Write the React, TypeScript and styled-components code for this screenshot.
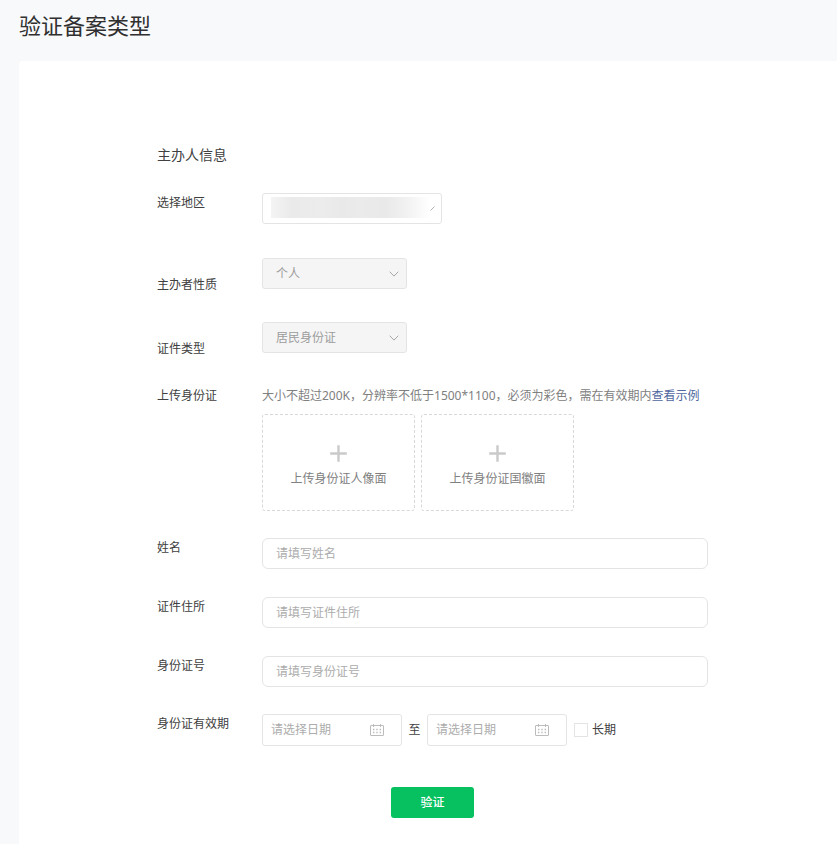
import React from "react";
import styled, { createGlobalStyle } from "styled-components";

const GlobalStyle = createGlobalStyle`
  *, *::before, *::after { box-sizing: border-box; }
  body {
    margin: 0;
    background: #f8f9fb;
    color: #404040;
    font-family: "Noto Sans", "Noto Sans CJK SC", sans-serif;
    font-size: 12px;
    line-height: 20px;
  }
  input, select, button { font: inherit; }
`;

const Page = styled.div`
  display: flex;
  flex-direction: column;
  min-height: 100vh;
  padding-left: 19px;
`;

const PageTitle = styled.h1`
  margin: 0;
  padding: 9px 0 20px;
  font-size: 22px;
  line-height: 32px;
  font-weight: 400;
  color: #303030;
`;

const Card = styled.main`
  flex: 1;
  padding: 84px 24px 26px 138px;
  background: #fff;
  border-radius: 4px 0 0 0;
`;

const Form = styled.form`
  max-width: 551px;
`;

const SectionTitle = styled.h2`
  margin: 0 0 28px;
  font-size: 14px;
  line-height: 20px;
  font-weight: 400;
`;

const Row = styled.div<{ $gap?: number; $alignEnd?: boolean }>`
  display: grid;
  grid-template-columns: 105px minmax(0, 1fr);
  align-items: ${(p) => (p.$alignEnd ? "end" : "start")};
  min-height: ${(p) => (p.$alignEnd ? "37px" : "31px")};
  margin-bottom: ${(p) => p.$gap ?? 27}px;
`;

const Label = styled.label`
  line-height: 20px;
`;

const SelectBox = styled.div<{ $width: number }>`
  position: relative;
  align-self: start;
  width: ${(p) => p.$width}px;
  height: 31px;
`;

const Select = styled.select`
  appearance: none;
  width: 100%;
  height: 31px;
  padding: 0 28px 0 13px;
  border: 1px solid #e4e4e4;
  border-radius: 3px;
  background: #fff;
  color: #404040;
  &:disabled {
    background: #f5f5f5;
    color: #9c9c9c;
    opacity: 1;
  }
`;

const Chevron = styled.svg`
  position: absolute;
  right: 8px;
  top: 11px;
  pointer-events: none;
`;

const Redaction = styled.span`
  position: absolute;
  left: 9px;
  right: 12px;
  top: 4px;
  height: 21px;
  pointer-events: none;
  background: linear-gradient(
    90deg,
    #f4f4f4 0%,
    #eaeaea 13%,
    #ececec 32%,
    #e9e9e9 45%,
    #ebebeb 55%,
    #e9e9e9 72%,
    #f2f2f2 86%,
    #fff 100%
  );
`;

const Tick = styled.svg`
  position: absolute;
  right: 7px;
  top: 13px;
  pointer-events: none;
`;

const Hint = styled.p`
  margin: 0 0 8px;
  color: #808080;
`;

const Link = styled.a`
  color: #4f67a0;
  text-decoration: none;
`;

const Uploads = styled.div`
  display: flex;
  flex-wrap: wrap;
  gap: 6px;
`;

const UploadButton = styled.button`
  display: flex;
  flex-direction: column;
  align-items: center;
  gap: 7px;
  width: 153px;
  height: 97px;
  padding: 30px 0 0;
  border: 1px dashed #d8d8d8;
  border-radius: 3px;
  background: #fff;
  color: #808080;
  cursor: pointer;
`;

const TextInput = styled.input`
  width: 100%;
  height: 31px;
  padding: 0 13px;
  border: 1px solid #e4e4e4;
  border-radius: 6px;
  background: #fff;
  color: #404040;
  &::placeholder { color: #acacac; opacity: 1; }
`;

const DateRange = styled.div`
  display: flex;
  flex-wrap: wrap;
  align-items: center;
`;

const DateField = styled.div`
  display: flex;
  align-items: center;
  width: 140px;
  height: 32px;
  padding: 0 17px 0 8px;
  border: 1px solid #e4e4e4;
  border-radius: 3px;
`;

const DateInput = styled.input`
  flex: 1;
  min-width: 0;
  padding: 0;
  border: 0;
  background: transparent;
  color: #404040;
  &::placeholder { color: #acacac; opacity: 1; }
`;

const Separator = styled.span`
  width: 25px;
  text-align: center;
`;

const LongTerm = styled.label`
  display: flex;
  align-items: center;
  gap: 4px;
  margin-left: 7px;
`;

const Checkbox = styled.input`
  appearance: none;
  width: 14px;
  height: 14px;
  margin: 0;
  border: 1px solid #e4e4e4;
  background: #fff;
  &:checked { background: #07c160; }
`;

const Actions = styled.div`
  display: flex;
  justify-content: center;
  padding-top: 14px;
`;

const SubmitButton = styled.button`
  width: 83px;
  height: 31px;
  padding: 0;
  border: 0;
  border-radius: 3px;
  background: #07c160;
  color: #fff;
  font-weight: 500;
  cursor: pointer;
`;

const ChevronIcon = () => (
  <Chevron width="10" height="10" viewBox="0 0 10 10" fill="none" stroke="#a6a6a6" aria-hidden="true">
    <path d="M.7 2.7 5 7.1 9.3 2.7" />
  </Chevron>
);

const PlusIcon = () => (
  <svg width="17" height="17" viewBox="0 0 17 17" stroke="#cacaca" strokeWidth="2.4" aria-hidden="true">
    <path d="M8.5 .2v16.6M.2 8.5h16.6" />
  </svg>
);

const CalendarIcon = () => (
  <svg width="14" height="12" viewBox="0 0 14 12" fill="none" stroke="#bcbcbc" aria-hidden="true">
    <rect x=".5" y="1.5" width="13" height="10" rx=".5" />
    <path d="M3.5 0v3M10.5 0v3" />
    <path
      d="M3 5.5h1.4M6.3 5.5h1.4M9.6 5.5H11M3 8.5h1.4M6.3 8.5h1.4M9.6 8.5H11"
      strokeWidth="1.4"
    />
  </svg>
);

const textFields = [
  { id: "name", label: "姓名", placeholder: "请填写姓名", gap: 28 },
  { id: "address", label: "证件住所", placeholder: "请填写证件住所", gap: 28 },
  { id: "id-number", label: "身份证号", placeholder: "请填写身份证号", gap: 27 },
];

export default function App() {
  return (
    <>
      <GlobalStyle />
      <Page>
        <PageTitle>验证备案类型</PageTitle>
        <Card>
          <Form onSubmit={(e) => e.preventDefault()}>
            <SectionTitle>主办人信息</SectionTitle>

            <Row $gap={34}>
              <Label htmlFor="region">选择地区</Label>
              <SelectBox $width={180}>
                <Select id="region" />
                <Redaction />
                <Tick width="5" height="5" viewBox="0 0 5 5" stroke="#b4b4b4" aria-hidden="true">
                  <path d="M.5 4.5l4-4" />
                </Tick>
              </SelectBox>
            </Row>

            <Row $alignEnd>
              <Label htmlFor="nature">主办者性质</Label>
              <SelectBox $width={145}>
                <Select id="nature" disabled>
                  <option>个人</option>
                </Select>
                <ChevronIcon />
              </SelectBox>
            </Row>

            <Row $alignEnd>
              <Label htmlFor="id-type">证件类型</Label>
              <SelectBox $width={145}>
                <Select id="id-type" disabled>
                  <option>居民身份证</option>
                </Select>
                <ChevronIcon />
              </SelectBox>
            </Row>

            <Row>
              <Label htmlFor="upload-front">上传身份证</Label>
              <div>
                <Hint>
                  大小不超过200K，分辨率不低于1500*1100，必须为彩色，需在有效期内<Link href="#example">查看示例</Link>
                </Hint>
                <Uploads>
                  <UploadButton id="upload-front" type="button">
                    <PlusIcon />
                    上传身份证人像面
                  </UploadButton>
                  <UploadButton type="button">
                    <PlusIcon />
                    上传身份证国徽面
                  </UploadButton>
                </Uploads>
              </div>
            </Row>

            {textFields.map((f) => (
              <Row key={f.id} $gap={f.gap}>
                <Label htmlFor={f.id}>{f.label}</Label>
                <TextInput id={f.id} type="text" placeholder={f.placeholder} />
              </Row>
            ))}

            <Row>
              <Label htmlFor="valid-from">身份证有效期</Label>
              <DateRange>
                <DateField>
                  <DateInput id="valid-from" type="text" placeholder="请选择日期" />
                  <CalendarIcon />
                </DateField>
                <Separator>至</Separator>
                <DateField>
                  <DateInput type="text" placeholder="请选择日期" aria-label="结束日期" />
                  <CalendarIcon />
                </DateField>
                <LongTerm>
                  <Checkbox type="checkbox" />
                  长期
                </LongTerm>
              </DateRange>
            </Row>

            <Actions>
              <SubmitButton type="submit">验证</SubmitButton>
            </Actions>
          </Form>
        </Card>
      </Page>
    </>
  );
}
